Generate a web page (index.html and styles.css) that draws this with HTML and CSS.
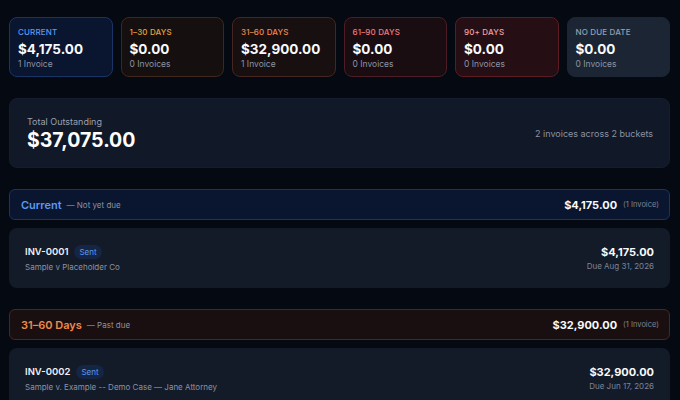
FILE: index.html
```html
<!DOCTYPE html>
<html lang="en">
<head>
    <meta charset="UTF-8">
    <meta name="viewport" content="width=device-width, initial-scale=1.0">
    <title>Aging Report</title>
    <link rel="stylesheet" href="styles.css">
</head>
<body>

<div class="page">
    <!-- Aging buckets -->
    <div class="buckets">
        <div class="bucket current">
            <div class="bucket-label">Current</div>
            <div class="bucket-amount">$4,175.00</div>
            <div class="bucket-count">1 Invoice</div>
        </div>
        <div class="bucket d30">
            <div class="bucket-label">1–30 Days</div>
            <div class="bucket-amount">$0.00</div>
            <div class="bucket-count">0 Invoices</div>
        </div>
        <div class="bucket d60">
            <div class="bucket-label">31–60 Days</div>
            <div class="bucket-amount">$32,900.00</div>
            <div class="bucket-count">1 Invoice</div>
        </div>
        <div class="bucket d90">
            <div class="bucket-label">61–90 Days</div>
            <div class="bucket-amount">$0.00</div>
            <div class="bucket-count">0 Invoices</div>
        </div>
        <div class="bucket d90plus">
            <div class="bucket-label">90+ Days</div>
            <div class="bucket-amount">$0.00</div>
            <div class="bucket-count">0 Invoices</div>
        </div>
        <div class="bucket nodue">
            <div class="bucket-label">No Due Date</div>
            <div class="bucket-amount">$0.00</div>
            <div class="bucket-count">0 Invoices</div>
        </div>
    </div>

    <!-- Total -->
    <div class="total">
        <div>
            <div class="total-label">Total Outstanding</div>
            <div class="total-amount">$37,075.00</div>
        </div>
        <div class="total-note">2 invoices across 2 buckets</div>
    </div>

    <!-- Current group -->
    <div class="group">
        <div class="group-head current">
            <div class="group-title"><span class="group-name">Current</span><span class="group-desc">— Not yet due</span></div>
            <div class="group-sum"><span class="group-total">$4,175.00</span><span class="group-count">(1 Invoice)</span></div>
        </div>
        <div class="invoice">
            <div>
                <div class="inv-top"><span class="inv-no">INV-0001</span><span class="badge">Sent</span></div>
                <div class="inv-matter">Sample v Placeholder Co</div>
            </div>
            <div class="inv-right">
                <div class="inv-amount">$4,175.00</div>
                <div class="inv-due">Due Aug 31, 2026</div>
            </div>
        </div>
    </div>

    <!-- 31-60 group -->
    <div class="group">
        <div class="group-head d60">
            <div class="group-title"><span class="group-name">31–60 Days</span><span class="group-desc">— Past due</span></div>
            <div class="group-sum"><span class="group-total">$32,900.00</span><span class="group-count">(1 Invoice)</span></div>
        </div>
        <div class="invoice">
            <div>
                <div class="inv-top"><span class="inv-no">INV-0002</span><span class="badge">Sent</span></div>
                <div class="inv-matter">Sample v. Example -- Demo Case — Jane Attorney</div>
            </div>
            <div class="inv-right">
                <div class="inv-amount">$32,900.00</div>
                <div class="inv-due">Due Jun 17, 2026</div>
            </div>
        </div>
    </div>
</div>

</body>
</html>
```

FILE: styles.css
```css
body {
    margin: 0;
    background-color: #050912;
    font-family: Inter, 'Noto Sans', sans-serif;
    color: #f1f5f9;
}
.page {
    padding: 17px 10px 20px 9px;
}
.buckets {
    display: grid;
    grid-template-columns: repeat(6, 1fr);
    gap: 8px;
}
.bucket {
    height: 60px;
    box-sizing: border-box;
    padding: 9px 8px 0 8px;
    border: 1px solid;
    border-radius: 8px;
}
.bucket-label {
    font-size: 8px;
    font-weight: 500;
    text-transform: uppercase;
    letter-spacing: 0.02em;
    line-height: 10px;
}
.bucket-amount {
    font-size: 13.5px;
    font-weight: 700;
    line-height: 18px;
    margin-top: 3px;
    color: #f8fafc;
}
.bucket-count {
    font-size: 8.5px;
    line-height: 12px;
    color: #8b93a3;
}
.bucket.current {
    background: #0a1530;
    border-color: #1b3466;
}
.bucket.current .bucket-label { color: #5b9af0; }
.bucket.d30 {
    background: #150f0f;
    border-color: #40271c;
}
.bucket.d30 .bucket-label { color: #e6a23c; }
.bucket.d60 {
    background: #170f10;
    border-color: #462620;
}
.bucket.d60 .bucket-label { color: #ef8a4a; }
.bucket.d90 {
    background: #1a0d12;
    border-color: #4d1c24;
}
.bucket.d90 .bucket-label { color: #f07b7b; }
.bucket.d90plus {
    background: #250e14;
    border-color: #5c1b22;
}
.bucket.d90plus .bucket-label { color: #f3a0a0; }
.bucket.nodue {
    background: #1c2533;
    border-color: #1c2533;
}
.bucket.nodue .bucket-label { color: #94a0b2; }

.total {
    margin-top: 21px;
    height: 70px;
    box-sizing: border-box;
    background: #111827;
    border: 1px solid #161d2c;
    border-radius: 8px;
    padding: 0 16px 0 17px;
    display: flex;
    align-items: center;
    justify-content: space-between;
}
.total-label {
    font-size: 9px;
    color: #98a1b1;
    line-height: 12px;
    margin-top: 1px;
}
.total-amount {
    font-size: 19.5px;
    font-weight: 700;
    line-height: 24px;
    color: #ffffff;
}
.total-note {
    font-size: 9px;
    color: #8b93a3;
}

.group {
    margin-top: 21px;
}
.group-head {
    height: 31px;
    box-sizing: border-box;
    border: 1px solid;
    border-radius: 6px;
    padding: 0 10px 0 11px;
    display: flex;
    align-items: center;
    justify-content: space-between;
}
.group-title,
.group-sum {
    display: flex;
    align-items: center;
}
.group-head.current {
    background: #0a1530;
    border-color: #1b3466;
}
.group-head.current .group-name { color: #5b9af0; }
.group-head.d60 {
    background: #1a0f10;
    border-color: #4a2620;
}
.group-head.d60 .group-name { color: #ef8a4a; }
.group-name {
    font-size: 11px;
    font-weight: 600;
}
.group-desc {
    font-size: 8px;
    color: #8b93a3;
    margin-left: 5px;
}
.group-total {
    font-size: 11px;
    font-weight: 700;
    color: #f8fafc;
}
.group-count {
    font-size: 7.5px;
    color: #7d8595;
    margin-left: 6px;
}

.invoice {
    margin-top: 8px;
    height: 60px;
    box-sizing: border-box;
    background: #131a28;
    border-radius: 8px;
    padding: 0 16px 0 16px;
    display: flex;
    align-items: center;
    justify-content: space-between;
}
.inv-top {
    display: flex;
    align-items: center;
    gap: 6px;
}
.inv-no {
    font-size: 9.5px;
    font-weight: 600;
    color: #eef1f6;
}
.badge {
    font-size: 8px;
    color: #5b9af0;
    background: #152546;
    border-radius: 8px;
    padding: 2px 5px;
    line-height: 10px;
}
.inv-matter {
    font-size: 8px;
    color: #8b93a3;
    margin-top: 3px;
}
.inv-right {
    text-align: right;
}
.inv-amount {
    font-size: 11px;
    font-weight: 700;
    color: #f8fafc;
    line-height: 15px;
}
.inv-due {
    font-size: 8px;
    color: #7d8595;
    margin-top: 1px;
}
```
